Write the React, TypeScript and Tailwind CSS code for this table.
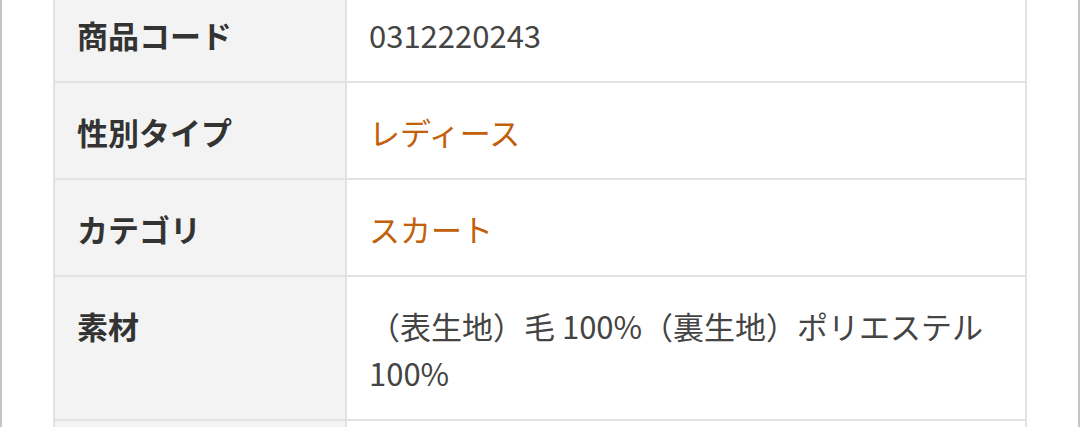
import React from 'react';

const rows: { label: string; value: string; link?: boolean }[] = [
  { label: '商品コード', value: '0312220243' },
  { label: '性別タイプ', value: 'レディース', link: true },
  { label: 'カテゴリ', value: 'スカート', link: true },
  { label: '素材', value: '（表生地）毛 100%（裏生地）ポリエステル 100%' },
  { label: '', value: '' },
];

export default function App() {
  return (
    <div className="h-[427px] w-[1080px] overflow-hidden bg-white font-['Noto_Sans_CJK_JP','Noto_Sans',sans-serif]">
      <div className="flex h-full flex-col border-x-2 border-[#c4c4c4] px-[51px]">
        <div className="-mt-[14px] border-x-2 border-[#e2e2e2]">
          {rows.map((r, i) => (
            <div
              key={i}
              className="grid grid-cols-[292px_1fr] border-b-2 border-[#e2e2e2] text-[31px] leading-[47px]"
            >
              <div className="border-r-2 border-[#e2e2e2] bg-[#f3f3f3] pt-[25px] pb-[23px] pl-[22px] pr-[20px] font-bold text-[#333333]">
                {r.label}
              </div>
              <div
                className={
                  r.link
                    ? 'pt-[25px] pb-[23px] pl-[22px] pr-[20px] text-[#c2600c]'
                    : 'pt-[25px] pb-[23px] pl-[22px] pr-[20px] text-[#444444]'
                }
              >
                {r.value}
              </div>
            </div>
          ))}
        </div>
      </div>
    </div>
  );
}
